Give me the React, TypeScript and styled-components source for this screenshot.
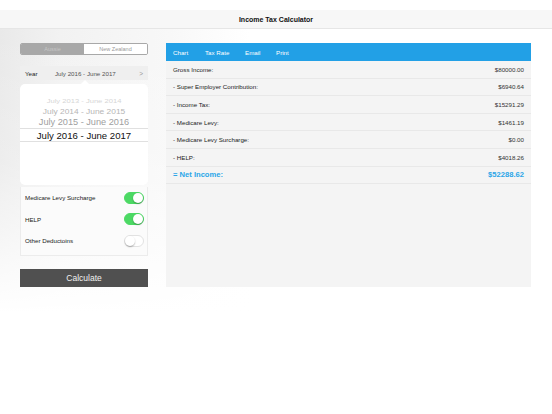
import styled, { createGlobalStyle } from "styled-components";

const GlobalStyle = createGlobalStyle`
  html, body {
    margin: 0;
    padding: 0;
    background: #ffffff;
    font-family: "Liberation Sans", Arial, sans-serif;
  }
`;

const Page = styled.div`
  width: 552px;
  height: 414px;
  position: relative;
  overflow: hidden;
  background: #ffffff;
`;

const StatusSpace = styled.div`
  height: 10px;
`;

const NavBar = styled.div`
  height: 18px;
  background: #f7f7f7;
  border-bottom: 1px solid #e6e6e6;
  display: flex;
  align-items: center;
  justify-content: center;
  font-size: 7px;
  font-weight: bold;
  color: #111;
`;

const Body = styled.div`
  display: flex;
  gap: 18px;
  padding: 14px 0 0 20px;
  height: 320px;
  background: linear-gradient(
      to bottom,
      rgba(255, 255, 255, 0) 0%,
      rgba(255, 255, 255, 0.2) 40%,
      #ffffff 85%
    ),
    linear-gradient(to right, #e9e9e9 0px, #f2f2f2 60px, #f8f8f8 170px, #ffffff 250px);
`;

const LeftColumn = styled.div`
  width: 128px;
  flex: none;
  display: flex;
  flex-direction: column;
`;

const Segmented = styled.div`
  display: flex;
  height: 12px;
  border: 1px solid #a8a8a8;
  border-radius: 2px;
  overflow: hidden;
  box-sizing: border-box;
`;

const Segment = styled.div<{ $active?: boolean }>`
  flex: 1;
  display: flex;
  align-items: center;
  justify-content: center;
  font-size: 5.5px;
  background: ${({ $active }) => ($active ? "#a8a8a8" : "#ffffff")};
  color: ${({ $active }) => ($active ? "#c6c6c6" : "#9a9a9a")};
`;

const YearRow = styled.div`
  margin-top: 11px;
  height: 14px;
  background: #efefef;
  display: flex;
  align-items: center;
  padding: 0 5px;
  font-size: 6.2px;
  color: #222;
`;

const YearValue = styled.span`
  flex: 1;
  text-align: center;
  color: #555;
  padding-right: 6px;
`;

const Chevron = styled.span`
  color: #999;
  font-size: 6.5px;
`;

const Picker = styled.div`
  margin-top: 4px;
  height: 101px;
  background: #ffffff;
  border-radius: 5px;
  position: relative;
  display: flex;
  flex-direction: column;
  align-items: center;
  padding-top: 14px;
  box-sizing: border-box;
  &::before {
    content: "";
    position: absolute;
    top: -4px;
    left: 61px;
    border-left: 4px solid transparent;
    border-right: 4px solid transparent;
    border-bottom: 4px solid #ffffff;
  }
`;

const PickerItem = styled.div<{ $size: number; $color: string; $h: number; $squash: number }>`
  height: ${({ $h }) => $h}px;
  line-height: ${({ $h }) => $h}px;
  font-size: ${({ $size }) => $size}px;
  color: ${({ $color }) => $color};
  white-space: nowrap;
  transform: scaleY(${({ $squash }) => $squash});
`;

const Selected = styled.div`
  width: 100%;
  height: 14px;
  box-sizing: border-box;
  border-top: 1px solid #e0e0e0;
  border-bottom: 1px solid #e0e0e0;
  display: flex;
  align-items: center;
  justify-content: center;
  font-size: 9.6px;
  color: #111;
`;

const Options = styled.div`
  margin-top: 2px;
  background: #fbfbfb;
  border: 1px solid #ececec;
  border-top: none;
  padding: 0 0 3px;
`;

const OptionRow = styled.div`
  height: 21.5px;
  display: flex;
  align-items: center;
  justify-content: space-between;
  padding: 0 3px 0 4px;
  font-size: 6.2px;
  color: #222;
`;

const Toggle = styled.div<{ $on?: boolean }>`
  width: 20px;
  height: 12px;
  border-radius: 6px;
  box-sizing: border-box;
  background: ${({ $on }) => ($on ? "#4cd964" : "#ffffff")};
  border: 1px solid ${({ $on }) => ($on ? "#4cd964" : "#e2e2e2")};
  position: relative;
  &::after {
    content: "";
    position: absolute;
    top: 0;
    left: ${({ $on }) => ($on ? "8px" : "0")};
    width: 10px;
    height: 10px;
    border-radius: 50%;
    background: #ffffff;
    box-shadow: 0 1px 1.5px rgba(0, 0, 0, 0.3);
  }
`;

const CalcButton = styled.div`
  margin-top: 13px;
  height: 18px;
  background: #505050;
  color: #f0f0f0;
  display: flex;
  align-items: center;
  justify-content: center;
  font-size: 8.5px;
`;

const RightPanel = styled.div`
  width: 365px;
  flex: none;
  height: 244px;
  background: #f4f4f4;
  display: flex;
  flex-direction: column;
`;

const TabBar = styled.div`
  height: 18px;
  flex: none;
  background: #22a0e6;
  display: flex;
  align-items: center;
  padding-left: 7px;
`;

const Tab = styled.span<{ $w: number }>`
  width: ${({ $w }) => $w}px;
  color: #ffffff;
  font-size: 6.2px;
`;

const ResultRow = styled.div<{ $total?: boolean }>`
  height: 17.6px;
  flex: none;
  box-sizing: border-box;
  display: flex;
  align-items: center;
  justify-content: space-between;
  padding: 0 7px;
  border-bottom: 1px solid #e8e8e8;
  font-size: ${({ $total }) => ($total ? "7.6px" : "6.2px")};
  font-weight: ${({ $total }) => ($total ? "bold" : "normal")};
  color: ${({ $total }) => ($total ? "#2ba6e8" : "#222")};
`;

const Value = styled.span<{ $total?: boolean }>`
  color: ${({ $total }) => ($total ? "#2ba6e8" : "#333")};
`;

const pickerItems = [
  { label: "July 2013 - June 2014", size: 7.6, color: "#d6d6d6", h: 8, squash: 0.7 },
  { label: "July 2014 - June 2015", size: 8.4, color: "#b6b6b6", h: 10, squash: 0.9 },
  { label: "July 2015 - June 2016", size: 9.2, color: "#a0a0a0", h: 12, squash: 1 },
];

const results = [
  { label: "Gross Income:", value: "$80000.00" },
  { label: "- Super Employer Contribution:", value: "$6940.64" },
  { label: "- Income Tax:", value: "$15291.29" },
  { label: "- Medicare Levy:", value: "$1461.19" },
  { label: "- Medicare Levy Surcharge:", value: "$0.00" },
  { label: "- HELP:", value: "$4018.26" },
];

export default function App() {
  return (
    <Page>
      <GlobalStyle />
      <StatusSpace />
      <NavBar>Income Tax Calculator</NavBar>
      <Body>
        <LeftColumn>
          <Segmented>
            <Segment $active>Aussie</Segment>
            <Segment>New Zealand</Segment>
          </Segmented>
          <YearRow>
            <span>Year</span>
            <YearValue>July 2016 - June 2017</YearValue>
            <Chevron>&gt;</Chevron>
          </YearRow>
          <Picker>
            {pickerItems.map((item) => (
              <PickerItem
                key={item.label}
                $size={item.size}
                $color={item.color}
                $h={item.h}
                $squash={item.squash}
              >
                {item.label}
              </PickerItem>
            ))}
            <Selected>July 2016 - June 2017</Selected>
          </Picker>
          <Options>
            <OptionRow>
              <span>Medicare Levy Surcharge</span>
              <Toggle $on />
            </OptionRow>
            <OptionRow>
              <span>HELP</span>
              <Toggle $on />
            </OptionRow>
            <OptionRow>
              <span>Other Deductoins</span>
              <Toggle />
            </OptionRow>
          </Options>
          <CalcButton>Calculate</CalcButton>
        </LeftColumn>
        <RightPanel>
          <TabBar>
            <Tab $w={32}>Chart</Tab>
            <Tab $w={40}>Tax Rate</Tab>
            <Tab $w={31}>Email</Tab>
            <Tab $w={30}>Print</Tab>
          </TabBar>
          {results.map((r) => (
            <ResultRow key={r.label}>
              <span>{r.label}</span>
              <Value>{r.value}</Value>
            </ResultRow>
          ))}
          <ResultRow $total>
            <span>= Net Income:</span>
            <Value $total>$52288.62</Value>
          </ResultRow>
        </RightPanel>
      </Body>
    </Page>
  );
}
